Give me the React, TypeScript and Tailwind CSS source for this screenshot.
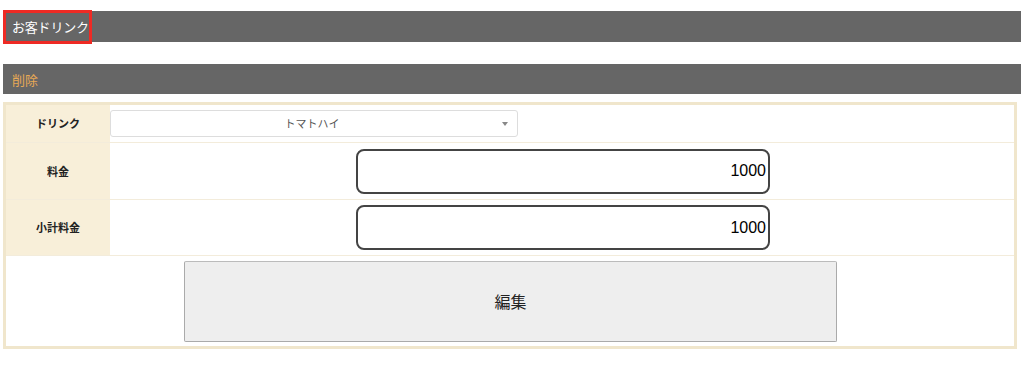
export default function App() {
  const font = { fontFamily: '"Noto Sans CJK JP", "Liberation Sans", sans-serif' };

  return (
    <div className="w-[1024px] h-[367px] bg-white" style={font}>
      <div className="pt-[11px] px-[3px]">
        <div className="h-[31px] bg-[#666666] flex items-stretch">
          <div className="relative flex items-center pl-[9px] w-[89px]">
            <span className="text-[13px] text-white leading-none tracking-[-0.2px]">お客ドリンク</span>
            <div className="absolute left-0 top-[-1px] w-[89px] h-[34px] border-[3px] border-[#ee2a24]" />
          </div>
        </div>

        <div className="mt-[22px] h-[30px] bg-[#666666] flex items-center pl-[9px]">
          <span className="text-[13px] text-[#e8a955] leading-none">削除</span>
        </div>

        <div className="mt-[8px] mr-[4px] border-[3px] border-[#f0e6cc]">
          <div className="flex h-[38px] border-b border-[#f3ecdb]">
            <div className="w-[104px] bg-[#f8efd9] flex items-center justify-center text-[11px] font-bold text-[#222]">
              ドリンク
            </div>
            <div className="flex-1 flex items-center">
              <div className="w-[408px] h-[27px] border border-[#dddddd] rounded-[3px] bg-white flex items-center relative">
                <span className="w-full text-center text-[11px] text-[#555] pr-[4px]">トマトハイ</span>
                <span className="absolute right-[9px] top-[11px] w-0 h-0 border-l-[3px] border-r-[3px] border-t-[4px] border-l-transparent border-r-transparent border-t-[#888]" />
              </div>
            </div>
          </div>

          {[
            { label: "料金", value: "1000", h: "h-[57px]" },
            { label: "小計料金", value: "1000", h: "h-[56px]" },
          ].map((row) => (
            <div key={row.label} className={`flex ${row.h} border-b border-[#f3ecdb]`}>
              <div className="w-[104px] bg-[#f8efd9] flex items-center justify-center text-[11px] font-bold text-[#222]">
                {row.label}
              </div>
              <div className="flex-1 flex items-center pl-[246px]">
                <div className="w-[414px] h-[45px] border-2 border-[#444] rounded-[8px] flex items-center justify-end pr-[2px] text-[16px] text-black" style={{ fontFamily: '"Liberation Sans", sans-serif' }}>
                  {row.value}
                </div>
              </div>
            </div>
          ))}

          <div className="h-[90px] flex items-center pl-[178px]">
            <div className="w-[653px] h-[81px] bg-[#eeeeee] border border-[#aaaaaa] border-t-[#bbbbbb] rounded-[2px] flex items-center justify-center text-[16px] text-[#222]">
              編集
            </div>
          </div>
        </div>
      </div>
    </div>
  );
}
